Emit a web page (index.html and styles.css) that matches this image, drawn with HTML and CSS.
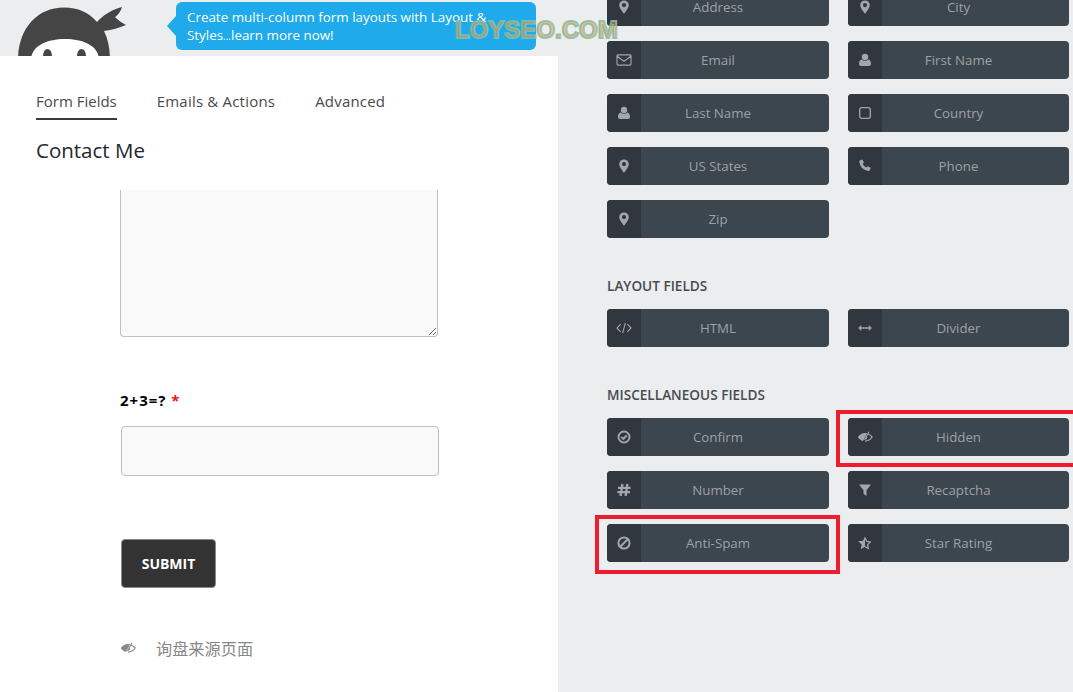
FILE: index.html
```html
<!DOCTYPE html>
<html lang="en">
<head>
<meta charset="utf-8">
<title>Contact Me</title>
<link rel="stylesheet" href="styles.css">
</head>
<body>
<svg class="sprite" xmlns="http://www.w3.org/2000/svg">
  <symbol id="i-marker" viewBox="0 0 16 16"><path fill-rule="evenodd" fill="currentColor" d="M8 1.4A4.800 4.800 0 0 0 3.200 6.200C3.200 9 8 14.800 8 14.800s4.800-5.800 4.800-8.600A4.800 4.800 0 0 0 8 1.400zm0 6.800a2.100 2.100 0 1 1 0-4.200 2.100 2.100 0 0 1 0 4.200z"/></symbol>
  <symbol id="i-mail" viewBox="0 0 16 16"><path fill="none" stroke="currentColor" stroke-width="1.100" d="M1.800 2.900h12.400a.8.800 0 0 1 .8.800v8.600a.8.800 0 0 1-.8.800H1.800a.8.800 0 0 1-.8-.8V3.700a.8.800 0 0 1 .8-.8zM1.200 4.200L8 9.300l6.800-5.100"/></symbol>
  <symbol id="i-user" viewBox="0 0 16 16"><circle cx="8" cy="5" r="3.200" fill="currentColor"/><path fill="currentColor" d="M4.700 7.400C3 7.700 2 9.200 2 11.800 2 13.200 2.800 14 4 14h8c1.200 0 2-.8 2-2.200 0-2.600-1-4.100-2.700-4.400-.8.800-2 1.300-3.300 1.300s-2.500-.5-3.300-1.300z"/></symbol>
  <symbol id="i-square" viewBox="0 0 16 16"><rect x="2.700" y="2.700" width="10.600" height="10.600" rx="2" fill="none" stroke="currentColor" stroke-width="1.300"/></symbol>
  <symbol id="i-phone" viewBox="0 0 16 16"><path fill="currentColor" d="M3.400 2.200l2-.7 1.500 3.100-1.200 1.200c.7 1.700 2 3 3.700 3.700l1.200-1.200 3.100 1.500-.7 2c-.3.800-1 1.300-1.900 1.100C6.800 12.800 3.200 9.200 2.300 4.100c-.1-.8.300-1.600 1.100-1.900z"/></symbol>
  <symbol id="i-code" viewBox="0 0 16 16"><path fill="none" stroke="currentColor" stroke-width="1.100" d="M4.600 4.200L1 8l3.600 3.800M11.400 4.200L15 8l-3.600 3.800M9.400 2.900L6.600 13.100"/></symbol>
  <symbol id="i-arrows" viewBox="0 0 16 16"><path fill="currentColor" d="M1.200 8l3-3v2.200h7.600V5l3 3-3 3V8.800H4.200V11z"/></symbol>
  <symbol id="i-check" viewBox="0 0 16 16"><circle cx="8" cy="8" r="5.500" fill="none" stroke="currentColor" stroke-width="1.900"/><path fill="none" stroke="currentColor" stroke-width="1.900" d="M5.300 7.900l2 2 3.400-3.400"/></symbol>
  <symbol id="i-eye" viewBox="0 0 16 16"><path fill="currentColor" d="M.8 8C2.300 5.600 4.700 3.900 8 3.900c.8 0 1.300.1 2 .3L6.100 12C3.800 11.500 2.100 10 .8 8z"/><path fill="none" stroke="currentColor" stroke-width="1.200" d="M10.800 5c1.800.6 3.200 1.700 4.300 3-1.500 2.400-3.900 4.100-7.100 4.100"/><path fill="none" stroke="currentColor" stroke-width="1.100" d="M11.900 2.700L7.600 10.900M10 8.200c-.3 1.100-1.100 1.900-2.200 2.200"/></symbol>
  <symbol id="i-hash" viewBox="0 0 16 16"><path fill="none" stroke="currentColor" stroke-width="2.300" d="M6.400 2L4.600 14M11.400 2L9.600 14M2 5.900h12.600M1.400 10.100H14"/></symbol>
  <symbol id="i-filter" viewBox="0 0 16 16"><path fill="currentColor" d="M2 2.600h12L9.500 8.200V14L6.500 11.800V8.200z"/></symbol>
  <symbol id="i-ban" viewBox="0 0 16 16"><circle cx="8" cy="8" r="5.600" fill="none" stroke="currentColor" stroke-width="2"/><path fill="none" stroke="currentColor" stroke-width="2" d="M4.200 11.800l7.600-7.600"/></symbol>
  <symbol id="i-star" viewBox="0 0 16 16"><path fill="currentColor" d="M8 1.400v10.400l-4.300 2.500 1-4.700L1.100 6.300l4.900-.5z"/><path fill="none" stroke="currentColor" stroke-width="1.200" stroke-linejoin="round" d="M8 2.400l1.600 3.900 4 .5-3 2.900.8 4L8 11.500"/></symbol>
</svg>

<div class="page">
  <div class="main">
    <header class="topbar">
      <svg class="logo" viewBox="0 0 130 56" width="130" height="56" xmlns="http://www.w3.org/2000/svg">
        <path fill="#444544" d="M18 60C18 30 36 7.500 64 7.500c14 0 25 5 33 14.500C103 15 113 9 122 7c-1 4-4 8-7 10 3 3 7 6 11 8-7 3-14 5-22 6 4 8 6 18 6 29z"/>
        <path fill="#fff" d="M31 60c0-13 14-21 34-21s34 8 34 21z"/>
        <ellipse cx="47.500" cy="56" rx="4.500" ry="7" fill="#444544"/>
        <ellipse cx="81.500" cy="56" rx="4.500" ry="7" fill="#444544"/>
      </svg>
      <div class="tip">Create multi-column form layouts with Layout &amp; Styles<span class="dots">...</span>learn more now!</div>
    </header>
    <section class="panel">
      <nav class="tabs">
        <a class="tab tab-active">Form Fields</a>
        <a class="tab">Emails &amp; Actions</a>
        <a class="tab">Advanced</a>
      </nav>
      <h1 class="title">Contact Me</h1>
      <form class="form">
        <textarea class="area"></textarea>
        <label class="label">2+3=? <span class="req">*</span></label>
        <input class="input" type="text">
        <button class="submit" type="button">SUBMIT</button>
        <div class="hidden-row">
          <svg class="hidden-icon" width="16" height="16"><use href="#i-eye"/></svg>
          <span class="hidden-name">询盘来源页面</span>
        </div>
      </form>
    </section>
  </div>

  <aside class="side">
    <div class="grid">
      <div class="btn"><span class="ico"><svg width="16" height="16"><use href="#i-marker"/></svg></span><span class="txt">Address</span></div>
      <div class="btn"><span class="ico"><svg width="16" height="16"><use href="#i-marker"/></svg></span><span class="txt">City</span></div>
      <div class="btn"><span class="ico"><svg width="16" height="16"><use href="#i-mail"/></svg></span><span class="txt">Email</span></div>
      <div class="btn"><span class="ico"><svg width="16" height="16"><use href="#i-user"/></svg></span><span class="txt">First Name</span></div>
      <div class="btn"><span class="ico"><svg width="16" height="16"><use href="#i-user"/></svg></span><span class="txt">Last Name</span></div>
      <div class="btn"><span class="ico"><svg width="16" height="16"><use href="#i-square"/></svg></span><span class="txt">Country</span></div>
      <div class="btn"><span class="ico"><svg width="16" height="16"><use href="#i-marker"/></svg></span><span class="txt">US States</span></div>
      <div class="btn"><span class="ico"><svg width="16" height="16"><use href="#i-phone"/></svg></span><span class="txt">Phone</span></div>
      <div class="btn"><span class="ico"><svg width="16" height="16"><use href="#i-marker"/></svg></span><span class="txt">Zip</span></div>
    </div>
    <h2 class="group">LAYOUT FIELDS</h2>
    <div class="grid">
      <div class="btn"><span class="ico"><svg width="16" height="16"><use href="#i-code"/></svg></span><span class="txt">HTML</span></div>
      <div class="btn"><span class="ico"><svg width="16" height="16"><use href="#i-arrows"/></svg></span><span class="txt">Divider</span></div>
    </div>
    <h2 class="group">MISCELLANEOUS FIELDS</h2>
    <div class="grid">
      <div class="btn"><span class="ico"><svg width="16" height="16"><use href="#i-check"/></svg></span><span class="txt">Confirm</span></div>
      <div class="btn"><span class="ico"><svg width="16" height="16"><use href="#i-eye"/></svg></span><span class="txt">Hidden</span><span class="mark mark-hidden"></span></div>
      <div class="btn"><span class="ico"><svg width="16" height="16"><use href="#i-hash"/></svg></span><span class="txt">Number</span></div>
      <div class="btn"><span class="ico"><svg width="16" height="16"><use href="#i-filter"/></svg></span><span class="txt">Recaptcha</span></div>
      <div class="btn"><span class="ico"><svg width="16" height="16"><use href="#i-ban"/></svg></span><span class="txt">Anti-Spam</span><span class="mark mark-spam"></span></div>
      <div class="btn"><span class="ico"><svg width="16" height="16"><use href="#i-star"/></svg></span><span class="txt">Star Rating</span></div>
    </div>
  </aside>
  <div class="watermark">LOYSEO.COM</div>
</div>
</body>
</html>
```

FILE: styles.css
```css
* { box-sizing: border-box; }
html, body { margin: 0; padding: 0; height: 100%; overflow: hidden; }
body { background: #ebedef; font-family: "Open Sans", "Noto Sans CJK SC", sans-serif; color: #333; }
.sprite { display: none; }

.page { position: relative; display: grid; grid-template-columns: 558px 1fr; height: 692px; overflow: hidden; }

.main { display: flex; flex-direction: column; height: 692px; }
.topbar { display: flex; height: 56px; flex: none; position: relative; overflow: hidden; }
.logo { display: block; flex: none; }
.tip { position: relative; width: 360px; height: 48px; margin: 2px 0 0 46px; padding: 6px 11px; background: #1eaaeb; color: #fff; border-radius: 6px; font-size: 13.400px; line-height: 18px; }
.tip::before { content: ""; position: absolute; left: -9px; top: 14px; border-style: solid; border-width: 10px 9px 10px 0; border-color: transparent #1eaaeb transparent transparent; }
.dots { font-size: 10px; }

.panel { flex: 1; background: #fff; padding: 35px 0 0 36px; }
.tabs { display: flex; gap: 40px; }
.tab { font-size: 15px; letter-spacing: .2px; line-height: 20px; padding-bottom: 7px; color: #4a4a4a; border-bottom: 2px solid transparent; height: 29px; }
.tab-active { letter-spacing: 0; border-bottom-color: #3b3b3b; }
.title { margin: 16px 0 0; font-size: 20.500px; line-height: 28px; font-weight: 400; color: #23282d; }

.form { display: flex; flex-direction: column; align-items: flex-start; margin: 26px 0 0 84px; }
.area { display: block; width: 318px; height: 147px; margin: 0; padding: 0; background: #f9f9f9; border: 1px solid #c0c0c0; border-top: 0; border-radius: 0 0 4px 4px; outline: 0; }
.label { margin-top: 52px; font-size: 15px; line-height: 22px; font-weight: 700; color: #000; letter-spacing: 1px; }
.req { color: #e8141c; }
.input { display: block; width: 318px; height: 50px; margin: 15px 0 0 1px; padding: 0; background: #f9f9f9; border: 1px solid #c0c0c0; border-radius: 4px; outline: 0; }
.submit { width: 95px; height: 49px; margin: 63px 0 0 1px; padding: 0; background: #333; color: #fff; border: 1px solid #888; border-radius: 4px; font-family: inherit; font-size: 14px; font-weight: 700; }
.hidden-row { display: flex; align-items: center; gap: 20px; height: 24px; margin-top: 48px; color: #888; }
.hidden-icon { display: block; flex: none; }
.hidden-name { font-family: "Noto Sans CJK SC", sans-serif; font-size: 16.200px; line-height: 24px; }

.side { padding-left: 49px; margin-top: -12px; }
.grid { display: grid; grid-template-columns: 222px 221px; column-gap: 19px; row-gap: 15px; }
.group { margin: 38px 0 13px; font-size: 13.600px; line-height: 20px; font-weight: 600; color: #474b50; }
.btn { position: relative; display: flex; height: 38px; background: #3c464e; border-radius: 4px; color: #9ca1a5; }
.ico { display: flex; align-items: center; justify-content: center; flex: none; width: 34px; background: #31373e; border-radius: 4px 0 0 4px; color: #a3a7ab; }
.ico svg { display: block; }
.txt { flex: 1; padding-right: 34px; text-align: center; font-size: 13.300px; line-height: 38px; }

.mark { position: absolute; border: 4px solid #ed1c2e; pointer-events: none; }
.mark-hidden { left: -12px; right: -20px; top: -8px; bottom: -11px; }
.mark-spam { left: -12px; right: -11px; top: -9px; bottom: -12px; }

.watermark { position: absolute; left: 455px; top: 15px; font-family: "Liberation Sans", sans-serif; font-size: 24px; line-height: 30px; font-weight: 700; color: rgba(236, 148, 83, .5); -webkit-text-stroke: 2px rgba(110, 200, 180, .85); paint-order: stroke fill; white-space: nowrap; }
```
